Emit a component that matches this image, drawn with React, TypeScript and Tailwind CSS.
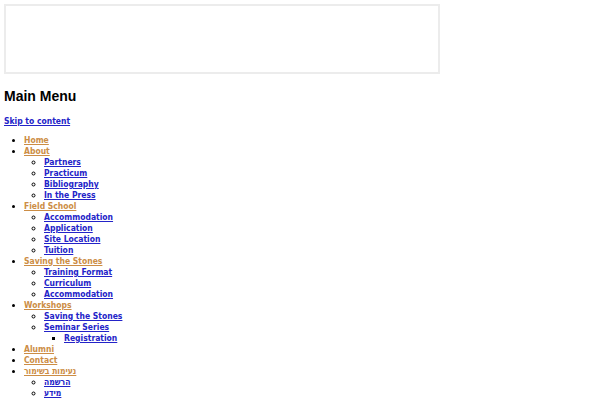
import React from 'react';

type Item = { label: string; children?: Item[] };

const menu: Item[] = [
  { label: 'Home' },
  { label: 'About', children: [{ label: 'Partners' }, { label: 'Practicum' }, { label: 'Bibliography' }, { label: 'In the Press' }] },
  { label: 'Field School', children: [{ label: 'Accommodation' }, { label: 'Application' }, { label: 'Site Location' }, { label: 'Tuition' }] },
  { label: 'Saving the Stones', children: [{ label: 'Training Format' }, { label: 'Curriculum' }, { label: 'Accommodation' }] },
  {
    label: 'Workshops',
    children: [{ label: 'Saving the Stones' }, { label: 'Seminar Series', children: [{ label: 'Registration' }] }],
  },
  { label: 'Alumni' },
  { label: 'Contact' },
  { label: 'נעימות בשימור', children: [{ label: 'הרשמה' }, { label: 'מידע' }] },
];

const bullets = ['list-disc', 'list-[circle]', 'list-[square]'];

function MenuList({ items, depth }: { items: Item[]; depth: number }) {
  return (
    <ul className={`${bullets[depth]} pl-5`}>
      {items.map((item, i) => (
        <li key={i}>
          <a
            href="#"
            className={`underline font-semibold ${depth === 0 ? 'text-[#cc8d45]' : 'text-[#2323c8]'}`}
          >
            {item.label}
          </a>
          {item.children && <MenuList items={item.children} depth={depth + 1} />}
        </li>
      ))}
    </ul>
  );
}

export default function App() {
  return (
    <div className="p-1 bg-white min-h-[400px] font-['DejaVu_Sans_Condensed','DejaVu_Sans',sans-serif] text-[8.5px] leading-[11px] text-black">
      <div className="w-[436px] h-[70px] border-2 border-[#ececec]" />
      <h2 className="mt-[14px] font-['Liberation_Sans',Arial,sans-serif] text-[14px] leading-[16px] font-bold">Main Menu</h2>
      <a href="#" className="block mt-[12px] underline text-[#2323c8] font-bold">Skip to content</a>
      <div className="mt-[8px]">
        <MenuList items={menu} depth={0} />
      </div>
    </div>
  );
}
